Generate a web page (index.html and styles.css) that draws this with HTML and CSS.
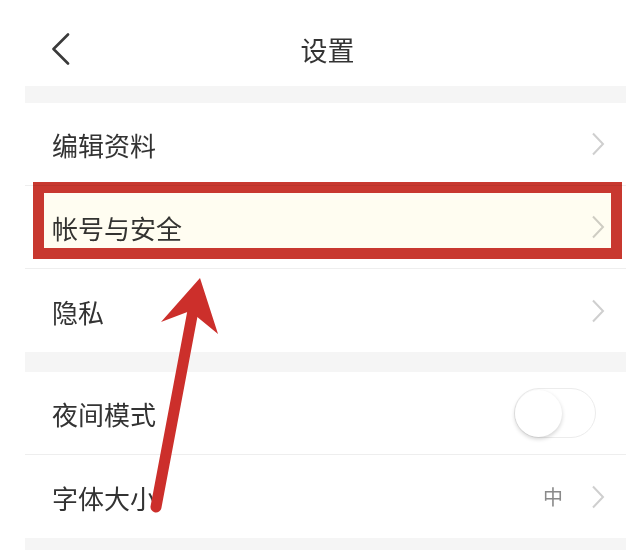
FILE: index.html
```html
<!DOCTYPE html>
<html lang="zh-CN">
<head>
<meta charset="utf-8">
<title>设置</title>
<link rel="stylesheet" href="styles.css">
</head>
<body>
<div class="page">
  <header class="header">
    <div class="back">
      <svg width="20" height="32" viewBox="0 0 20 32"><polyline points="17,1.5 2.5,16 17,30.5" fill="none" stroke="#3a3a3a" stroke-width="2.6" stroke-linecap="round" stroke-linejoin="round"/></svg>
    </div>
    <h1 class="title">设置</h1>
    <div></div>
  </header>
  <div class="gap gap-top"></div>
  <section class="group">
    <div class="row"><span class="label">编辑资料</span><svg class="chev" width="14" height="24" viewBox="0 0 14 24"><polyline points="2,1.5 12,12 2,22.5" fill="none" stroke="#cfcfcf" stroke-width="2"/></svg></div>
    <div class="row"><span class="label">帐号与安全</span><svg class="chev" width="14" height="24" viewBox="0 0 14 24"><polyline points="2,1.5 12,12 2,22.5" fill="none" stroke="#cfcfcf" stroke-width="2"/></svg></div>
    <div class="row"><span class="label">隐私</span><svg class="chev" width="14" height="24" viewBox="0 0 14 24"><polyline points="2,1.5 12,12 2,22.5" fill="none" stroke="#cfcfcf" stroke-width="2"/></svg></div>
  </section>
  <div class="gap gap-mid"></div>
  <section class="group">
    <div class="row"><span class="label">夜间模式</span><span class="toggle"><span class="knob"></span></span></div>
    <div class="row"><span class="label">字体大小</span><span class="value">中</span><svg class="chev" width="14" height="24" viewBox="0 0 14 24"><polyline points="2,1.5 12,12 2,22.5" fill="none" stroke="#cfcfcf" stroke-width="2"/></svg></div>
  </section>
  <div class="gap gap-bottom"></div>
</div>
<div class="highlight"></div>
<svg class="arrow" width="637" height="550" viewBox="0 0 637 550">
  <line x1="195" y1="300" x2="156" y2="507" stroke="#cc2f2b" stroke-width="11" stroke-linecap="round"/>
  <polygon points="200,278 161,322 190,311 218,334" fill="#cc2f2b"/>
</svg>
</body>
</html>
```

FILE: styles.css
```css
html, body {
  margin: 0;
  padding: 0;
  background: #ffffff;
}
body {
  font-family: "Noto Sans CJK SC", "Noto Sans", sans-serif;
  color: #333333;
  position: relative;
  width: 637px;
  height: 550px;
  overflow: hidden;
}
.page {
  margin-left: 25px;
  width: 601px;
}
.header {
  height: 86px;
  box-sizing: border-box;
  padding-top: 12px;
  display: grid;
  grid-template-columns: 1fr auto 1fr;
  align-items: center;
}
.back {
  padding-left: 26px;
  display: flex;
  align-items: center;
}
.title {
  margin: 0;
  font-size: 27px;
  font-weight: 400;
  color: #333;
  line-height: 1;
  padding-left: 4px;
}
.gap {
  background: #f5f5f5;
}
.gap-top { height: 17px; }
.gap-mid { height: 20px; }
.gap-bottom { height: 13px; }
.group {
  background: #ffffff;
}
.row {
  height: 83px;
  display: flex;
  align-items: center;
  padding: 0 21px 0 27px;
  border-bottom: 1px solid #eeeeee;
  box-sizing: border-box;
}
.row:last-child {
  border-bottom: none;
}
.label {
  flex: 1;
  font-size: 26px;
  line-height: 1;
  color: #333;
  padding-top: 2px;
}
.chev {
  display: block;
}
.value {
  font-size: 20px;
  color: #8a8a8a;
  margin-right: 28px;
}
.toggle {
  width: 82px;
  height: 50px;
  border-radius: 25px;
  box-sizing: border-box;
  border: 1.5px solid #ececec;
  background: #ffffff;
  margin-right: 9px;
  display: flex;
  align-items: center;
}
.knob {
  width: 47px;
  height: 47px;
  border-radius: 50%;
  background: #ffffff;
  box-shadow: 0 2px 4px rgba(0, 0, 0, 0.18);
}
.highlight {
  position: absolute;
  left: 33px;
  top: 182px;
  width: 589px;
  height: 77px;
  box-sizing: border-box;
  border: 11px solid #c8382f;
  background: #fffdf1;
  mix-blend-mode: multiply;
}
.arrow {
  position: absolute;
  left: 0;
  top: 0;
  pointer-events: none;
}
```
